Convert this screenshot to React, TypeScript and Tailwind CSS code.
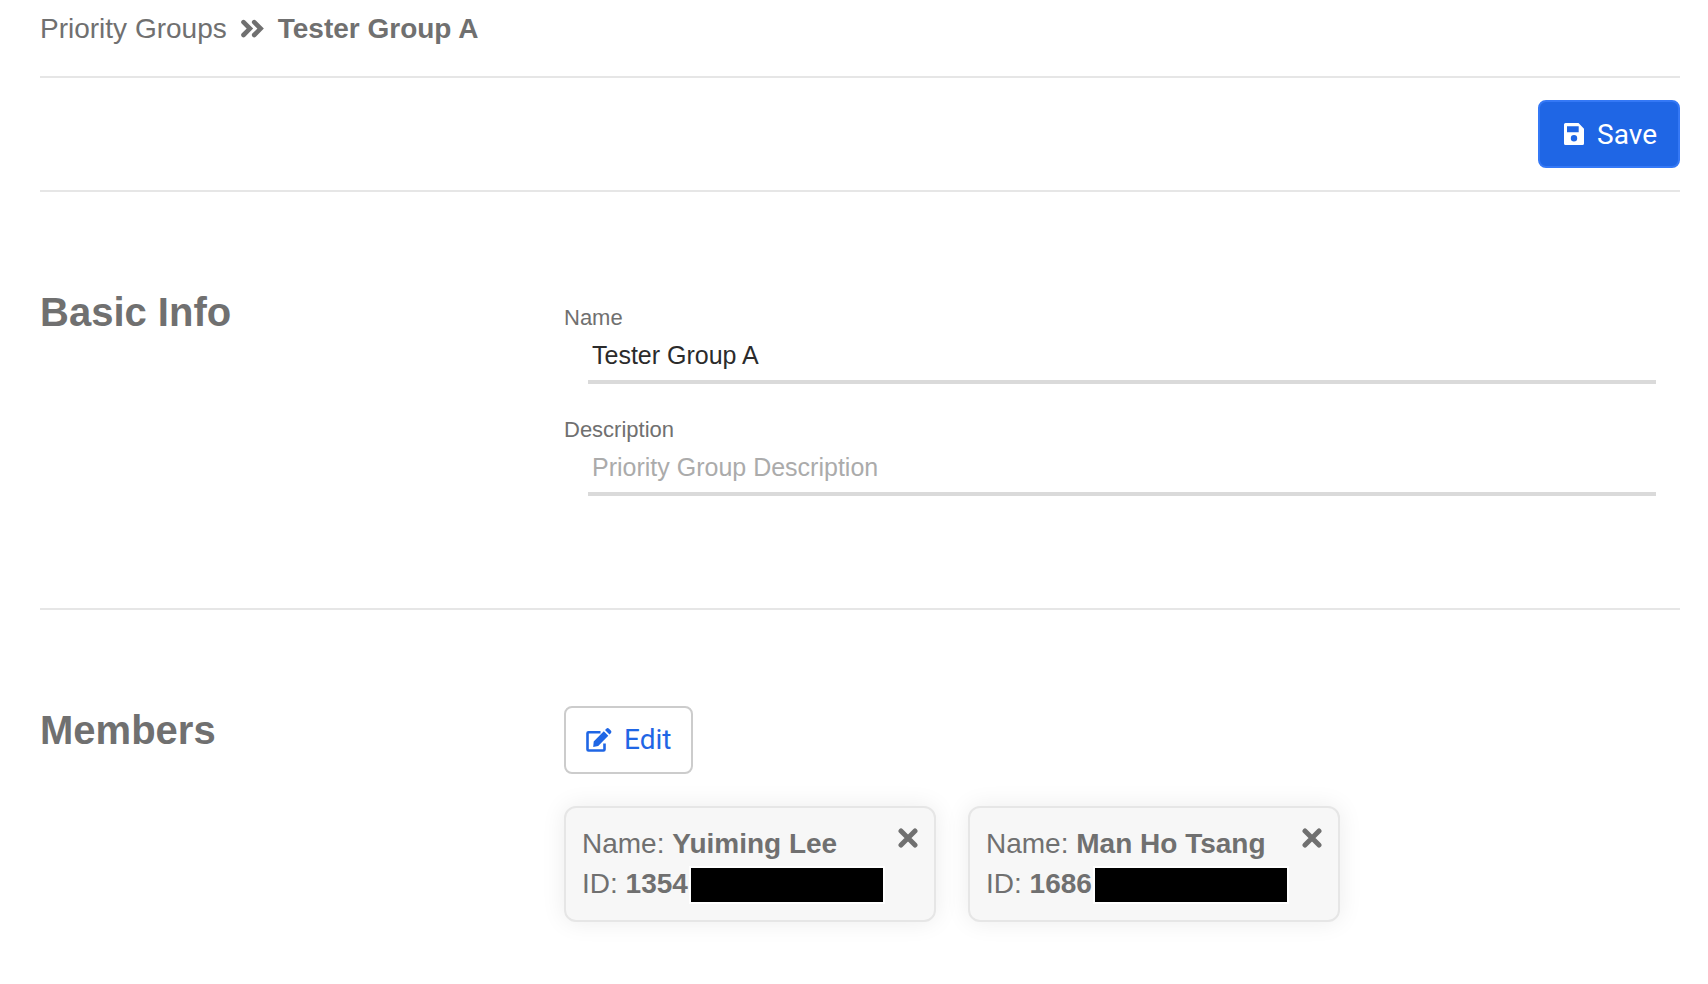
import { useState } from 'react';

type Member = { name: string; id: string };

const initialMembers: Member[] = [
  { name: 'Yuiming Lee', id: '1354' },
  { name: 'Man Ho Tsang', id: '1686' },
];

function DoubleAngle() {
  return (
    <svg viewBox="0 0 23 20" className="h-5 w-[23px]" fill="none" stroke="currentColor" strokeWidth="4.600" strokeLinecap="round" strokeLinejoin="miter" aria-hidden="true">
      <path d="M2.500 3.200 8.900 9.600 2.500 16M13.200 3.200 19.600 9.600 13.200 16" />
    </svg>
  );
}

function Cross() {
  return (
    <svg viewBox="0 0 20 20" className="size-5" fill="none" stroke="currentColor" strokeWidth="5" strokeLinecap="round" aria-hidden="true">
      <path d="M3 3 17 17M17 3 3 17" />
    </svg>
  );
}

function Floppy() {
  return (
    <svg viewBox="0 0 24 24" className="size-6" fill="currentColor" fillRule="evenodd" aria-hidden="true">
      <path d="M4.500 0H17.500L23 5.700V20.500A1.500 1.500 0 0 1 21.500 22H4.500A1.500 1.500 0 0 1 3 20.500V1.500A1.500 1.500 0 0 1 4.500 0ZM6 3.200V9.200H17.700V3.200ZM13 12.100A3.200 3.200 0 1 0 13 18.500A3.200 3.200 0 1 0 13 12.100Z" />
    </svg>
  );
}

function PenSquare() {
  return (
    <svg viewBox="0 0 26 24" className="h-6 w-[26px]" aria-hidden="true">
      <path d="M14.500 4.200H2.500A1 1 0 0 0 1.500 5.200V21.500A1 1 0 0 0 2.500 22.500H17.500A1 1 0 0 0 18.500 21.500V15.500" fill="none" stroke="currentColor" strokeWidth="2.600" />
      <path d="M17.800 3.200 22.300 7.700 12.200 18 7.200 18.900 7.700 13.500ZM19 2 20.300.7A2 2 0 0 1 23 .7L24.800 2.500A2 2 0 0 1 24.800 5.200L23.500 6.500Z" fill="currentColor" />
    </svg>
  );
}

function MemberCard({ member, onRemove }: { member: Member; onRemove: () => void }) {
  return (
    <li className="flex w-[372px] items-start justify-between rounded-xl border-2 border-[#e6e6e6] bg-[#f7f7f7] p-4 shadow-[0_0_24px_rgba(0,0,0,0.08)]">
      <div className="leading-10">
        <p>
          Name: <strong>{member.name}</strong>
        </p>
        <p className="flex items-center">
          ID:&nbsp;<strong>{member.id}</strong>
          <span className="mt-0.5 ml-px h-[38px] w-[196px] border-2 border-white bg-black" />
        </p>
      </div>
      <button type="button" aria-label={`Remove ${member.name}`} onClick={onRemove} className="mt-1">
        <Cross />
      </button>
    </li>
  );
}

type FieldProps = {
  id: string;
  label: string;
  value: string;
  placeholder?: string;
  onChange: (value: string) => void;
};

function Field({ id, label, value, placeholder, onChange }: FieldProps) {
  return (
    <div className="flex flex-col">
      <label htmlFor={id} className="text-[22px] leading-8">{label}</label>
      <input
        id={id}
        value={value}
        placeholder={placeholder}
        onChange={(e) => onChange(e.target.value)}
        className="mx-6 h-[50px] border-b-4 border-[#dadada] px-1 pb-1 text-[25px] text-[#2b2b2b] outline-none placeholder:text-[#ababab]"
      />
    </div>
  );
}

export default function App() {
  const [name, setName] = useState('Tester Group A');
  const [description, setDescription] = useState('');
  const [members, setMembers] = useState(initialMembers);

  return (
    <main className="bg-white pr-7 pl-10 font-['Liberation_Sans',Arial,sans-serif] text-[28px] text-[#707070]">
      <nav aria-label="Breadcrumb" className="flex h-[78px] items-start gap-3.5 border-b-2 border-[#e6e6e6] pt-[9px] leading-10">
        <a href="#groups">Priority Groups</a>
        <span className="flex h-10 items-center">
          <DoubleAngle />
        </span>
        <strong>Tester Group A</strong>
      </nav>

      <div className="flex justify-end border-b-2 border-[#e6e6e6] py-[22px]">
        <button type="button" className="flex h-[68px] items-center gap-3 rounded-lg border-2 border-[#3478f6] bg-[#1f66e5] px-[21px] pt-0.5 font-[Roboto,sans-serif] text-white">
          <Floppy />
          Save
        </button>
      </div>

      <section className="flex border-b-2 border-[#e6e6e6] pt-24 pb-[112px]">
        <h2 className="w-[524px] shrink-0 text-[40px] leading-12 font-bold">Basic Info</h2>
        <div className="flex grow flex-col gap-[30px] pt-[14px]">
          <Field id="name" label="Name" value={name} onChange={setName} />
          <Field id="description" label="Description" value={description} placeholder="Priority Group Description" onChange={setDescription} />
        </div>
      </section>

      <section className="flex pt-24 pb-12">
        <h2 className="w-[524px] shrink-0 text-[40px] leading-12 font-bold">Members</h2>
        <div className="flex grow flex-col items-start gap-8">
          <button type="button" className="flex h-[68px] items-center gap-3 rounded-lg border-2 border-[#cccccc] bg-white px-5 font-[Roboto,sans-serif] text-[#1f66e5]">
            <PenSquare />
            Edit
          </button>
          <ul className="flex flex-wrap gap-8">
            {members.map((member) => (
              <MemberCard key={member.id} member={member} onRemove={() => setMembers(members.filter((m) => m.id !== member.id))} />
            ))}
          </ul>
        </div>
      </section>
    </main>
  );
}
